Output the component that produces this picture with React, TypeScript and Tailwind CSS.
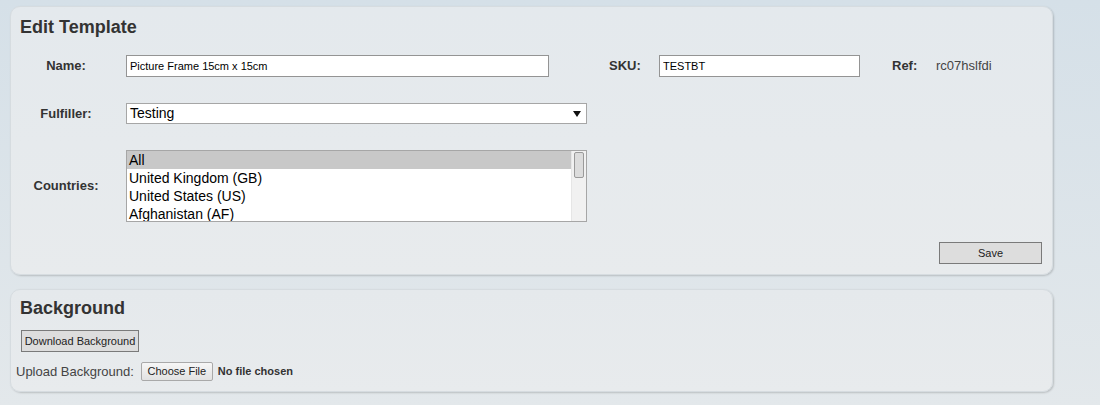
const countries = ['All', 'United Kingdom (GB)', 'United States (US)', 'Afghanistan (AF)']

export default function App() {
    return (
        <div className="min-h-[405px] bg-gradient-to-b from-[#d5e0e8] to-[#e3e8eb] pt-[6px] pl-[10px] pb-[13px] font-['Liberation_Sans',Arial,sans-serif] text-[#333]">
            {/* Edit template panel */}
            <section className="w-[1043px] rounded-[10px] border border-[#d6dce0] bg-gradient-to-b from-[#e4e9ed] to-[#e8ebed] pt-[10px] pl-[9px] pr-[10px] pb-[10px] shadow-[1px_1px_2px_rgba(0,0,0,0.18)]">
                <h2 className="m-0 text-[18px] font-bold leading-[21px] text-[#333]">Edit Template</h2>

                <div className="mt-[17px] flex h-[22px] items-center">
                    <label className="w-[92px] text-center text-[13px] font-bold">Name:</label>
                    <input
                        defaultValue="Picture Frame 15cm x 15cm"
                        className="ml-[14px] h-[22px] w-[423px] border border-[#949494] bg-white px-[3px] text-[11px] text-black outline-none"
                    />
                    <label className="ml-[60px] w-[50px] text-[13px] font-bold">SKU:</label>
                    <input
                        defaultValue="TESTBT"
                        className="h-[22px] w-[201px] border border-[#949494] bg-white px-[3px] text-[11px] text-black outline-none"
                    />
                    <label className="ml-[32px] w-[44px] text-[13px] font-bold">Ref:</label>
                    <span className="text-[13px] text-[#444]">rc07hslfdi</span>
                </div>

                <div className="mt-[26px] flex h-[21px] items-center">
                    <label className="w-[92px] text-center text-[13px] font-bold">Fulfiller:</label>
                    <div className="ml-[14px] flex h-[21px] w-[461px] items-center justify-between border border-[#a6a6a6] bg-white pl-[3px] pr-[5px] text-[14px] text-black">
                        <span>Testing</span>
                        <svg width="8" height="6" viewBox="0 0 8 6">
                            <path d="M0 0 H8 L4 6 Z" fill="#111" />
                        </svg>
                    </div>
                </div>

                <div className="mt-[26px] flex items-center">
                    <label className="w-[92px] text-center text-[13px] font-bold">Countries:</label>
                    <div className="ml-[14px] flex h-[72px] w-[461px] border border-[#a6a6a6] bg-white">
                        <div className="flex-1 overflow-hidden">
                            {countries.map((c, i) => (
                                <div
                                    key={c}
                                    className={
                                        i === 0
                                            ? 'h-[18px] bg-[#c8c8c8] pl-[2px] text-[14px] leading-[18px] text-black'
                                            : 'h-[18px] pl-[2px] text-[14px] leading-[18px] text-black'
                                    }
                                >
                                    {c}
                                </div>
                            ))}
                        </div>
                        <div className="w-[15px] border-l border-[#e6e6e6] bg-[#f1f1f1] px-[2px] pt-[1px]">
                            <div className="h-[26px] rounded-[2px] border border-[#9a9a9a] bg-[#dcdcdc]" />
                        </div>
                    </div>
                </div>

                <div className="mt-[20px] flex justify-end">
                    <button className="h-[22px] w-[103px] border border-[#7a7a7a] bg-[#dddddd] text-[11px] text-[#222]">Save</button>
                </div>
            </section>

            {/* Background panel */}
            <section className="mt-[14px] w-[1043px] rounded-[10px] border border-[#d6dce0] bg-gradient-to-b from-[#e5e9ec] to-[#e8ebed] pt-[8px] pl-[9px] pr-[10px] pb-[10px] shadow-[1px_1px_2px_rgba(0,0,0,0.18)]">
                <h2 className="m-0 text-[18px] font-bold leading-[21px] text-[#333]">Background</h2>
                <button className="ml-[1px] mt-[11px] block h-[22px] w-[118px] border border-[#7a7a7a] bg-[#dddddd] text-[11px] text-[#222]">
                    Download Background
                </button>
                <div className="-ml-[4px] mt-[10px] flex h-[19px] items-center">
                    <span className="text-[13px] text-[#444]">Upload Background:</span>
                    <button className="ml-[7px] h-[19px] w-[72px] rounded-[2px] border border-[#a9a9a9] bg-gradient-to-b from-[#f6f6f6] to-[#e2e2e2] text-[11px] text-[#222]">
                        Choose File
                    </button>
                    <span className="ml-[5px] text-[11px] font-bold text-[#333]">No file chosen</span>
                </div>
            </section>
        </div>
    )
}
